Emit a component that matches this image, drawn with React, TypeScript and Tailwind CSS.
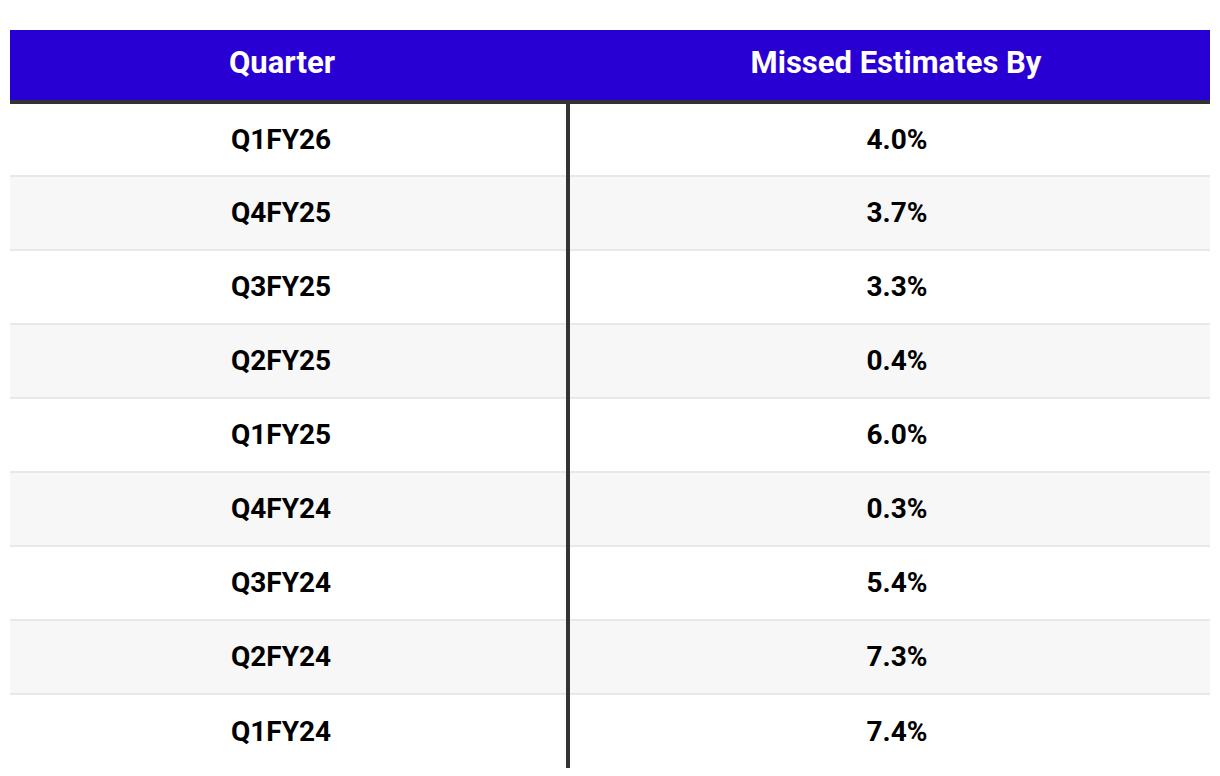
import React from 'react'

const rows = [
  { quarter: 'Q1FY26', missed: '4.0%' },
  { quarter: 'Q4FY25', missed: '3.7%' },
  { quarter: 'Q3FY25', missed: '3.3%' },
  { quarter: 'Q2FY25', missed: '0.4%' },
  { quarter: 'Q1FY25', missed: '6.0%' },
  { quarter: 'Q4FY24', missed: '0.3%' },
  { quarter: 'Q3FY24', missed: '5.4%' },
  { quarter: 'Q2FY24', missed: '7.3%' },
  { quarter: 'Q1FY24', missed: '7.4%' },
]

export default function App() {
  return (
    <div className="w-[1220px] h-[776px] bg-white pt-[30px] px-[10px] overflow-hidden" style={{ fontFamily: 'Roboto, "Liberation Sans", sans-serif' }}>
      <table className="w-[1200px] border-collapse table-fixed">
        <colgroup>
          <col className="w-[558px]" />
          <col className="w-[642px]" />
        </colgroup>
        <thead>
          <tr className="bg-[#2900d4] h-[72px] border-b-4 border-[#333333]">
            <th className="text-white text-[31px] font-bold text-center pr-[14px] pb-[4px]">Quarter</th>
            <th className="text-white text-[31px] font-bold text-center pl-[14px] pb-[4px]">Missed Estimates By</th>
          </tr>
        </thead>
        <tbody>
          {rows.map((row, i) => (
            <tr
              key={row.quarter}
              className={`h-[74px] ${i < rows.length - 1 ? 'border-b-2 border-[#e8e8e8]' : ''} ${i % 2 === 1 ? 'bg-[#f7f7f7]' : 'bg-white'}`}
            >
              <td className="text-[28px] font-bold text-black text-center pr-[14px] border-r-4 border-r-[#333333]">{row.quarter}</td>
              <td className="text-[28px] font-bold text-black text-center pl-[14px]">{row.missed}</td>
            </tr>
          ))}
        </tbody>
      </table>
    </div>
  )
}
